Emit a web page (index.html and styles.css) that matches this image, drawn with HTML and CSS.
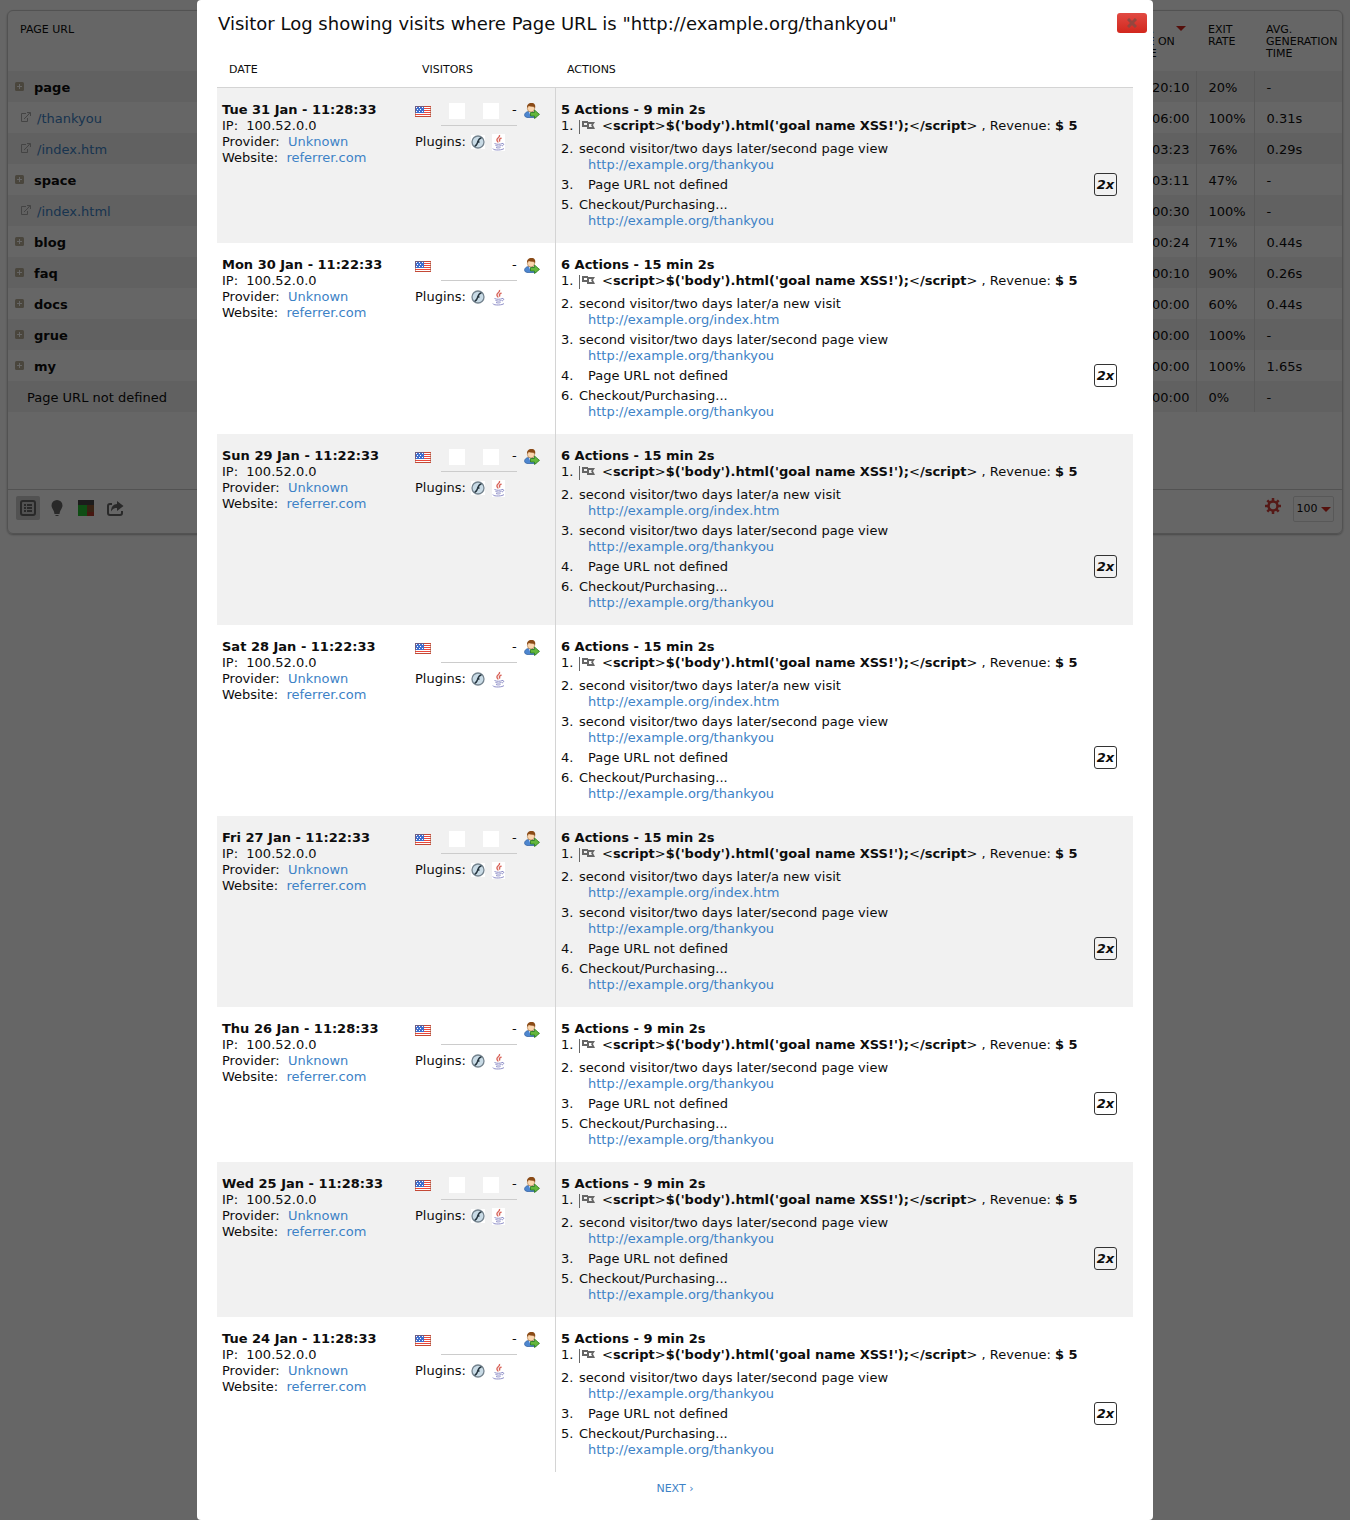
FILE: index.html
```
<!DOCTYPE html>
<html lang="en">
<head>
<meta charset="utf-8">
<title>Visitor Log</title>
<link rel="stylesheet" href="styles.css">
</head>
<body>
<svg class="sprite" aria-hidden="true">
  <symbol id="i-flag" viewBox="0 0 16 11"><path fill="#fff" d="M0 0h16v11H0z"/><path fill="#e8483c" d="M0 0h16v1H0zM0 2h16v1H0zM0 4h16v1H0zM0 6h16v1H0zM0 8h16v1H0zM0 10h16v1H0z"/><path fill="#3f6fd0" d="M0 0h9v7H0z"/><path fill="#fff" d="M1 1h1v1H1zM4 1h1v1H4zM7 1h1v1H7zM2 3h1v1H2zM5 3h1v1H5zM1 5h1v1H1zM4 5h1v1H4zM7 5h1v1H7z"/><path fill="none" stroke="#a04a30" stroke-opacity=".5" d="M.5.5h15v10H.5z"/></symbol>
  <symbol id="i-visitor" viewBox="0 0 16 16"><path fill="#4d86cf" stroke="#2c5c9e" stroke-width=".7" d="M1 13.500c-1.500-2.500 1-5 4-5h4l3 3v3H3z"/><path fill="#fff" d="M5 8.500h3l-2 3z"/><circle cx="7" cy="5.500" r="3.600" fill="#fbd6ae" stroke="#a5713c" stroke-width=".6"/><path fill="#8a4a16" d="M3.200 5C2.500 2 4.500 0 7.500 0s4.500 2 3.500 5.500L10 3.700C8 3.800 6 3.600 4.500 3z"/><path fill="#63b73b" stroke="#2c7c1e" stroke-width=".8" d="M6.500 9.500h4V7l5 4.400-5 4.200V13h-4z"/></symbol>
  <symbol id="i-flash" viewBox="0 0 14 14"><path fill="#fff" d="M0 0h14v14H0z"/><circle cx="7" cy="7" r="6" fill="#c9dbe6" stroke="#74838e" stroke-width="1.300"/><path fill="none" stroke="#26353f" stroke-width="1.500" d="M10.500 3C8 3 7.500 5 6.800 7S5.500 11 3.600 11.200M6 7h2.500"/></symbol>
  <symbol id="i-java" viewBox="0 0 13 17"><path fill="#fff" d="M0 0h13v17H0z"/><path fill="none" stroke="#d8645a" stroke-width="1.400" d="M7.500 1c1 2.500-3.500 3-2.500 5.500.3.900 1 1 1 2M9.500 4C7 5 7 6 8 7.500"/><path fill="none" stroke="#8f8fc8" d="M2.500 9.500c2 1 5.500 1 8 0M3.500 11.500c2 .8 4 .8 6 0M4 13.500c1.500.6 3 .6 4.500 0M10 9.500c2-.5 2.500 1.500 0 2.500M1 14.500c-.5 2 9 2 11 0"/></symbol>
  <symbol id="i-goal" viewBox="0 0 16 14"><path fill="#666" d="M0 0h1v14H0zM3 1h6v1h7l-2 3 2 4H8V7H3zM5 3v2h3V3zM10 4v3h3L12 5l1-1z" fill-rule="evenodd"/></symbol>
  <symbol id="i-plus" viewBox="0 0 9 9"><rect width="9" height="9" rx="1.500" fill="#b8ae98"/><path fill="#fff" d="M4 2h1v2h2v1H5v2H4V5H2V4h2z"/></symbol>
  <symbol id="i-out" viewBox="0 0 11 10"><path fill="none" stroke="#aaa" d="M6 1.500H1.500v8h6V6M4 7l5.500-5.500M7 .5h3.500V4M10 .5 8 3"/></symbol>
</svg>

<main class="page">
  <section class="report">
    <table class="pages">
      <thead><tr><th class="c-url">Page URL</th><th class="c-time"><span class="arrow"></span>Avg. time on page</th><th class="c-exit">Exit rate</th><th class="c-gen">Avg. generation time</th></tr></thead>
      <tbody>
        <tr><td class="dir"><svg><use href="#i-plus"/></svg>page</td><td>00:20:10</td><td>20%</td><td>-</td></tr>
        <tr><td class="url"><svg><use href="#i-out"/></svg><a href="#">/thankyou</a></td><td>00:06:00</td><td>100%</td><td>0.31s</td></tr>
        <tr><td class="url"><svg><use href="#i-out"/></svg><a href="#">/index.htm</a></td><td>00:03:23</td><td>76%</td><td>0.29s</td></tr>
        <tr><td class="dir"><svg><use href="#i-plus"/></svg>space</td><td>00:03:11</td><td>47%</td><td>-</td></tr>
        <tr><td class="url"><svg><use href="#i-out"/></svg><a href="#">/index.html</a></td><td>00:00:30</td><td>100%</td><td>-</td></tr>
        <tr><td class="dir"><svg><use href="#i-plus"/></svg>blog</td><td>00:00:24</td><td>71%</td><td>0.44s</td></tr>
        <tr><td class="dir"><svg><use href="#i-plus"/></svg>faq</td><td>00:00:10</td><td>90%</td><td>0.26s</td></tr>
        <tr><td class="dir"><svg><use href="#i-plus"/></svg>docs</td><td>00:00:00</td><td>60%</td><td>0.44s</td></tr>
        <tr><td class="dir"><svg><use href="#i-plus"/></svg>grue</td><td>00:00:00</td><td>100%</td><td>-</td></tr>
        <tr><td class="dir"><svg><use href="#i-plus"/></svg>my</td><td>00:00:00</td><td>100%</td><td>1.65s</td></tr>
        <tr><td class="none">Page URL not defined</td><td>00:00:00</td><td>0%</td><td>-</td></tr>
      </tbody>
    </table>
    <footer class="tools">
      <button class="tool on" aria-label="Table"><svg width="16" height="16" viewBox="0 0 16 16"><rect x="1" y="1" width="14" height="14" rx="2" fill="none" stroke="#666" stroke-width="2"/><path fill="#666" d="M4 4h2v2H4zM7 4h5v2H7zM4 7h2v2H4zM7 7h5v2H7zM4 10h2v2H4zM7 10h5v2H7z"/></svg></button>
      <button class="tool" aria-label="Insights"><svg width="12" height="16" viewBox="0 0 12 16"><path fill="#666" d="M6 0a5.500 5.500 0 0 1 5.500 5.500C11.500 8.500 9 9.500 8.500 14h-5C3 9.500.5 8.500.5 5.500A5.500 5.500 0 0 1 6 0zM4.500 15h3v1h-3z"/></svg></button>
      <button class="tool" aria-label="Row evolution"><svg width="16" height="16" viewBox="0 0 16 16"><path fill="#484848" d="M0 0h16v5H0z"/><path fill="#26c032" d="M0 5h9v11H0z"/><path fill="#8a5530" d="M9 5h7v7H9z"/><path fill="#b03a2a" d="M9 12h7v4H9z"/></svg></button>
      <button class="tool" aria-label="Export"><svg width="17" height="15" viewBox="0 0 17 15"><path fill="none" stroke="#666" stroke-width="2" d="M5 3H3a2 2 0 0 0-2 2v7a2 2 0 0 0 2 2h10a2 2 0 0 0 2-2v-2"/><path fill="#666" d="M10 0l6.500 5-6.500 5V7C7 7 5.500 8 4 10.500 4 6 6 3.500 10 3z"/></svg></button>
      <button class="tool gear" aria-label="Settings"><svg width="16" height="16" viewBox="0 0 16 16"><circle cx="8" cy="8" r="4.500" fill="none" stroke="#d4403a" stroke-width="2.500"/><path stroke="#d4403a" stroke-width="2.500" d="M8 0v3M8 13v3M0 8h3M13 8h3M2.300 2.300l2 2M11.700 11.700l2 2M2.300 13.700l2-2M11.700 4.300l2-2"/></svg></button>
      <button class="limit">100<span class="arrow"></span></button>
    </footer>
  </section>
</main>

<div class="overlay">
  <section class="dialog" role="dialog" aria-labelledby="dialog-title">
    <header class="dialog-head">
      <h1 id="dialog-title">Visitor Log showing visits where Page URL is "http://example.org/thankyou"</h1>
      <button class="close" aria-label="Close"><svg width="10" height="10" viewBox="0 0 10 10"><path stroke="#94463f" stroke-width="3" d="M1 1l8 8M9 1L1 9"/></svg></button>
    </header>
    <table class="log">
      <thead><tr><th class="c-date">Date</th><th class="c-visitors">Visitors</th><th>Actions</th></tr></thead>
      <tbody>
        <tr>
          <td><strong>Tue 31 Jan - 11:28:33</strong><br>IP: &nbsp;100.52.0.0<br>Provider: &nbsp;<a href="#">Unknown</a><br>Website: &nbsp;<a href="#">referrer.com</a></td>
          <td><div class="who"><svg class="flag"><use href="#i-flag"/></svg><span class="blanks"><i></i><i></i></span><span class="dash">-</span><svg class="visitor"><use href="#i-visitor"/></svg></div><div class="plugins">Plugins:<svg class="flash"><use href="#i-flash"/></svg><svg class="java"><use href="#i-java"/></svg></div></td>
          <td><strong>5 Actions - 9 min 2s</strong>
            <ol>
              <li class="goal"><b>1.</b><svg><use href="#i-goal"/></svg><p><strong><i>&lt;</i>script<i>&gt;</i>$('body').html('goal name XSS!');<i>&lt;</i>/script<i>&gt;</i></strong> , Revenue: <strong>$ 5</strong></p></li>
              <li><b>2.</b><p>second visitor/two days later/second page view<a href="#">http://example.org/thankyou</a></p></li>
              <li><b>3.</b><p class="undefined">Page URL not defined</p><em>2x</em></li>
              <li><b>5.</b><p>Checkout/Purchasing...<a href="#">http://example.org/thankyou</a></p></li>
            </ol></td>
        </tr>
        <tr>
          <td><strong>Mon 30 Jan - 11:22:33</strong><br>IP: &nbsp;100.52.0.0<br>Provider: &nbsp;<a href="#">Unknown</a><br>Website: &nbsp;<a href="#">referrer.com</a></td>
          <td><div class="who"><svg class="flag"><use href="#i-flag"/></svg><span class="blanks"><i></i><i></i></span><span class="dash">-</span><svg class="visitor"><use href="#i-visitor"/></svg></div><div class="plugins">Plugins:<svg class="flash"><use href="#i-flash"/></svg><svg class="java"><use href="#i-java"/></svg></div></td>
          <td><strong>6 Actions - 15 min 2s</strong>
            <ol>
              <li class="goal"><b>1.</b><svg><use href="#i-goal"/></svg><p><strong><i>&lt;</i>script<i>&gt;</i>$('body').html('goal name XSS!');<i>&lt;</i>/script<i>&gt;</i></strong> , Revenue: <strong>$ 5</strong></p></li>
              <li><b>2.</b><p>second visitor/two days later/a new visit<a href="#">http://example.org/index.htm</a></p></li>
              <li><b>3.</b><p>second visitor/two days later/second page view<a href="#">http://example.org/thankyou</a></p></li>
              <li><b>4.</b><p class="undefined">Page URL not defined</p><em>2x</em></li>
              <li><b>6.</b><p>Checkout/Purchasing...<a href="#">http://example.org/thankyou</a></p></li>
            </ol></td>
        </tr>
        <tr>
          <td><strong>Sun 29 Jan - 11:22:33</strong><br>IP: &nbsp;100.52.0.0<br>Provider: &nbsp;<a href="#">Unknown</a><br>Website: &nbsp;<a href="#">referrer.com</a></td>
          <td><div class="who"><svg class="flag"><use href="#i-flag"/></svg><span class="blanks"><i></i><i></i></span><span class="dash">-</span><svg class="visitor"><use href="#i-visitor"/></svg></div><div class="plugins">Plugins:<svg class="flash"><use href="#i-flash"/></svg><svg class="java"><use href="#i-java"/></svg></div></td>
          <td><strong>6 Actions - 15 min 2s</strong>
            <ol>
              <li class="goal"><b>1.</b><svg><use href="#i-goal"/></svg><p><strong><i>&lt;</i>script<i>&gt;</i>$('body').html('goal name XSS!');<i>&lt;</i>/script<i>&gt;</i></strong> , Revenue: <strong>$ 5</strong></p></li>
              <li><b>2.</b><p>second visitor/two days later/a new visit<a href="#">http://example.org/index.htm</a></p></li>
              <li><b>3.</b><p>second visitor/two days later/second page view<a href="#">http://example.org/thankyou</a></p></li>
              <li><b>4.</b><p class="undefined">Page URL not defined</p><em>2x</em></li>
              <li><b>6.</b><p>Checkout/Purchasing...<a href="#">http://example.org/thankyou</a></p></li>
            </ol></td>
        </tr>
        <tr>
          <td><strong>Sat 28 Jan - 11:22:33</strong><br>IP: &nbsp;100.52.0.0<br>Provider: &nbsp;<a href="#">Unknown</a><br>Website: &nbsp;<a href="#">referrer.com</a></td>
          <td><div class="who"><svg class="flag"><use href="#i-flag"/></svg><span class="blanks"><i></i><i></i></span><span class="dash">-</span><svg class="visitor"><use href="#i-visitor"/></svg></div><div class="plugins">Plugins:<svg class="flash"><use href="#i-flash"/></svg><svg class="java"><use href="#i-java"/></svg></div></td>
          <td><strong>6 Actions - 15 min 2s</strong>
            <ol>
              <li class="goal"><b>1.</b><svg><use href="#i-goal"/></svg><p><strong><i>&lt;</i>script<i>&gt;</i>$('body').html('goal name XSS!');<i>&lt;</i>/script<i>&gt;</i></strong> , Revenue: <strong>$ 5</strong></p></li>
              <li><b>2.</b><p>second visitor/two days later/a new visit<a href="#">http://example.org/index.htm</a></p></li>
              <li><b>3.</b><p>second visitor/two days later/second page view<a href="#">http://example.org/thankyou</a></p></li>
              <li><b>4.</b><p class="undefined">Page URL not defined</p><em>2x</em></li>
              <li><b>6.</b><p>Checkout/Purchasing...<a href="#">http://example.org/thankyou</a></p></li>
            </ol></td>
        </tr>
        <tr>
          <td><strong>Fri 27 Jan - 11:22:33</strong><br>IP: &nbsp;100.52.0.0<br>Provider: &nbsp;<a href="#">Unknown</a><br>Website: &nbsp;<a href="#">referrer.com</a></td>
          <td><div class="who"><svg class="flag"><use href="#i-flag"/></svg><span class="blanks"><i></i><i></i></span><span class="dash">-</span><svg class="visitor"><use href="#i-visitor"/></svg></div><div class="plugins">Plugins:<svg class="flash"><use href="#i-flash"/></svg><svg class="java"><use href="#i-java"/></svg></div></td>
          <td><strong>6 Actions - 15 min 2s</strong>
            <ol>
              <li class="goal"><b>1.</b><svg><use href="#i-goal"/></svg><p><strong><i>&lt;</i>script<i>&gt;</i>$('body').html('goal name XSS!');<i>&lt;</i>/script<i>&gt;</i></strong> , Revenue: <strong>$ 5</strong></p></li>
              <li><b>2.</b><p>second visitor/two days later/a new visit<a href="#">http://example.org/index.htm</a></p></li>
              <li><b>3.</b><p>second visitor/two days later/second page view<a href="#">http://example.org/thankyou</a></p></li>
              <li><b>4.</b><p class="undefined">Page URL not defined</p><em>2x</em></li>
              <li><b>6.</b><p>Checkout/Purchasing...<a href="#">http://example.org/thankyou</a></p></li>
            </ol></td>
        </tr>
        <tr>
          <td><strong>Thu 26 Jan - 11:28:33</strong><br>IP: &nbsp;100.52.0.0<br>Provider: &nbsp;<a href="#">Unknown</a><br>Website: &nbsp;<a href="#">referrer.com</a></td>
          <td><div class="who"><svg class="flag"><use href="#i-flag"/></svg><span class="blanks"><i></i><i></i></span><span class="dash">-</span><svg class="visitor"><use href="#i-visitor"/></svg></div><div class="plugins">Plugins:<svg class="flash"><use href="#i-flash"/></svg><svg class="java"><use href="#i-java"/></svg></div></td>
          <td><strong>5 Actions - 9 min 2s</strong>
            <ol>
              <li class="goal"><b>1.</b><svg><use href="#i-goal"/></svg><p><strong><i>&lt;</i>script<i>&gt;</i>$('body').html('goal name XSS!');<i>&lt;</i>/script<i>&gt;</i></strong> , Revenue: <strong>$ 5</strong></p></li>
              <li><b>2.</b><p>second visitor/two days later/second page view<a href="#">http://example.org/thankyou</a></p></li>
              <li><b>3.</b><p class="undefined">Page URL not defined</p><em>2x</em></li>
              <li><b>5.</b><p>Checkout/Purchasing...<a href="#">http://example.org/thankyou</a></p></li>
            </ol></td>
        </tr>
        <tr>
          <td><strong>Wed 25 Jan - 11:28:33</strong><br>IP: &nbsp;100.52.0.0<br>Provider: &nbsp;<a href="#">Unknown</a><br>Website: &nbsp;<a href="#">referrer.com</a></td>
          <td><div class="who"><svg class="flag"><use href="#i-flag"/></svg><span class="blanks"><i></i><i></i></span><span class="dash">-</span><svg class="visitor"><use href="#i-visitor"/></svg></div><div class="plugins">Plugins:<svg class="flash"><use href="#i-flash"/></svg><svg class="java"><use href="#i-java"/></svg></div></td>
          <td><strong>5 Actions - 9 min 2s</strong>
            <ol>
              <li class="goal"><b>1.</b><svg><use href="#i-goal"/></svg><p><strong><i>&lt;</i>script<i>&gt;</i>$('body').html('goal name XSS!');<i>&lt;</i>/script<i>&gt;</i></strong> , Revenue: <strong>$ 5</strong></p></li>
              <li><b>2.</b><p>second visitor/two days later/second page view<a href="#">http://example.org/thankyou</a></p></li>
              <li><b>3.</b><p class="undefined">Page URL not defined</p><em>2x</em></li>
              <li><b>5.</b><p>Checkout/Purchasing...<a href="#">http://example.org/thankyou</a></p></li>
            </ol></td>
        </tr>
        <tr>
          <td><strong>Tue 24 Jan - 11:28:33</strong><br>IP: &nbsp;100.52.0.0<br>Provider: &nbsp;<a href="#">Unknown</a><br>Website: &nbsp;<a href="#">referrer.com</a></td>
          <td><div class="who"><svg class="flag"><use href="#i-flag"/></svg><span class="blanks"><i></i><i></i></span><span class="dash">-</span><svg class="visitor"><use href="#i-visitor"/></svg></div><div class="plugins">Plugins:<svg class="flash"><use href="#i-flash"/></svg><svg class="java"><use href="#i-java"/></svg></div></td>
          <td><strong>5 Actions - 9 min 2s</strong>
            <ol>
              <li class="goal"><b>1.</b><svg><use href="#i-goal"/></svg><p><strong><i>&lt;</i>script<i>&gt;</i>$('body').html('goal name XSS!');<i>&lt;</i>/script<i>&gt;</i></strong> , Revenue: <strong>$ 5</strong></p></li>
              <li><b>2.</b><p>second visitor/two days later/second page view<a href="#">http://example.org/thankyou</a></p></li>
              <li><b>3.</b><p class="undefined">Page URL not defined</p><em>2x</em></li>
              <li><b>5.</b><p>Checkout/Purchasing...<a href="#">http://example.org/thankyou</a></p></li>
            </ol></td>
        </tr>
      </tbody>
    </table>
    <nav class="pager"><a href="#">Next ›</a></nav>
  </section>
</div>
</body>
</html>
```
FILE: styles.css
```
* { box-sizing: border-box; }

body {
  margin: 0;
  display: grid;
  background: #fff;
  color: #0d0d0d;
  font: 13px/16px "DejaVu Sans", Verdana, sans-serif;
}

a { color: #3d82c6; text-decoration: none; }
button { padding: 0; border: 0; background: none; font: inherit; color: inherit; }
svg { display: block; flex: none; }
.sprite { position: absolute; width: 0; height: 0; }

.page, .overlay { grid-area: 1 / 1; min-width: 0; }

/* Report behind the dialog */
.page { padding: 10px 7px; }

.report {
  border: 1px solid #ccc;
  border-radius: 6px;
  box-shadow: 0 1px 2px rgba(0, 0, 0, .3);
}

.pages { width: 100%; border-collapse: collapse; table-layout: fixed; }
.pages th {
  height: 60px;
  padding: 13px 12px 11px;
  font-size: 11px;
  line-height: 12px;
  font-weight: normal;
  text-align: left;
  text-transform: uppercase;
  vertical-align: top;
}
.pages td { height: 31px; padding: 2px 12px 0; border-left: 1px solid #dedede; }
.pages td:first-child { border-left: 0; }
.pages tbody tr:nth-child(odd) { background: #f2f2f2; }
.c-time { width: 80px; }
.c-exit { width: 58px; }
.c-gen { width: 88px; }
.pages .c-time, .pages .c-gen { padding-right: 0; }
.pages td:nth-child(2) { text-align: right; padding-right: 6px; }

.pages .dir { padding-left: 7px; font-weight: bold; }
.pages .url { padding-left: 12px; }
.pages .none { padding-left: 19px; }
.pages td svg { display: inline-block; vertical-align: 1px; }
.dir svg { width: 9px; height: 9px; margin-right: 10px; }
.url svg { width: 11px; height: 10px; margin-right: 6px; }

.arrow {
  display: inline-block;
  border: 5px solid transparent;
  border-top-color: #d4291f;
  border-bottom: 0;
}
.pages .arrow { float: right; margin: 2px 10px 0 0; }

.tools {
  display: flex;
  align-items: flex-start;
  gap: 5px;
  height: 44px;
  margin-top: 77px;
  padding: 6px 8px;
  border-top: 1px solid #ccc;
}
.tool { display: grid; place-items: center; width: 24px; height: 24px; border-radius: 2px; }
.tool.on { background: #ccc; }
.gear { margin: -2px 3px 0 auto; }
.limit {
  display: flex;
  align-items: center;
  justify-content: center;
  gap: 3px;
  width: 41px;
  height: 26px;
  border: 1px solid #ddd;
  border-radius: 2px;
  font-size: 11px;
}

/* Dialog */
.overlay { position: relative; background: rgba(0, 0, 0, .6); }
.dialog {
  width: 100%;
  max-width: 956px;
  margin: 0 auto;
  padding: 0 20px 24px;
  background: #fff;
  border-radius: 4px;
}
.dialog-head {
  display: flex;
  justify-content: space-between;
  align-items: flex-start;
  height: 52px;
  margin-right: -14px;
  padding-top: 13px;
}
h1 { margin: 0; padding-left: 1px; font-size: 18px; line-height: 22px; font-weight: normal; }
.close {
  display: grid;
  place-items: center;
  width: 30px;
  height: 20px;
  border-radius: 3px;
  background: linear-gradient(#e14a43, #d2271d);
}

.log { width: 100%; border-collapse: separate; border-spacing: 0; table-layout: fixed; }
.log th {
  height: 36px;
  padding: 0 12px;
  border-bottom: 1px solid #d4d4d4;
  font-size: 11px;
  line-height: 12px;
  font-weight: normal;
  text-align: left;
  text-transform: uppercase;
}
.c-date { width: 193px; }
.c-visitors { width: 145px; }
.log td { padding: 14px 5px; vertical-align: top; }
.log td:last-child { border-left: 1px solid #d4d4d4; }
.log tbody tr:nth-child(odd) { background: #f1f1f1; }

.who { display: flex; align-items: flex-start; height: 24px; }
.flag { width: 16px; height: 11px; margin-top: 4px; }
.blanks {
  display: flex;
  gap: 18px;
  width: 76px;
  height: 23px;
  margin: 1px 0 0 10px;
  padding-left: 8px;
  border-bottom: 1px solid #ccc;
}
.blanks i { width: 16px; height: 16px; background: #fff; }
.dash { width: 5px; margin: 0 7px 0 -5px; }
.visitor { width: 16px; height: 16px; margin-top: 1px; }
.plugins { display: flex; height: 16px; margin-top: 8px; }
.flash { width: 14px; height: 14px; margin: 1px 7px 0 5px; }
.java { width: 13px; height: 17px; }

.log ol { margin: 0; padding: 0; list-style: none; }
.log li { display: flex; margin-bottom: 4px; }
.log li:last-child { margin-bottom: 0; }
.log .goal { margin-bottom: 7px; }
.log li b { width: 18px; flex: none; font-weight: normal; }
.log li p { margin: 0; }
.log li p a { display: block; padding-left: 9px; }
.log li .undefined { padding-left: 9px; }
.goal svg { width: 16px; height: 14px; margin: 2px 7px 0 0; }
.goal i { font-weight: normal; font-style: normal; }
.log em {
  display: grid;
  place-items: center;
  width: 23px;
  height: 23px;
  margin: -4px 11px -3px auto;
  border: 1px solid #333;
  border-radius: 3px;
  font-weight: bold;
}

.pager { padding-top: 9px; text-align: center; font-size: 11px; line-height: 15px; text-transform: uppercase; }
```
